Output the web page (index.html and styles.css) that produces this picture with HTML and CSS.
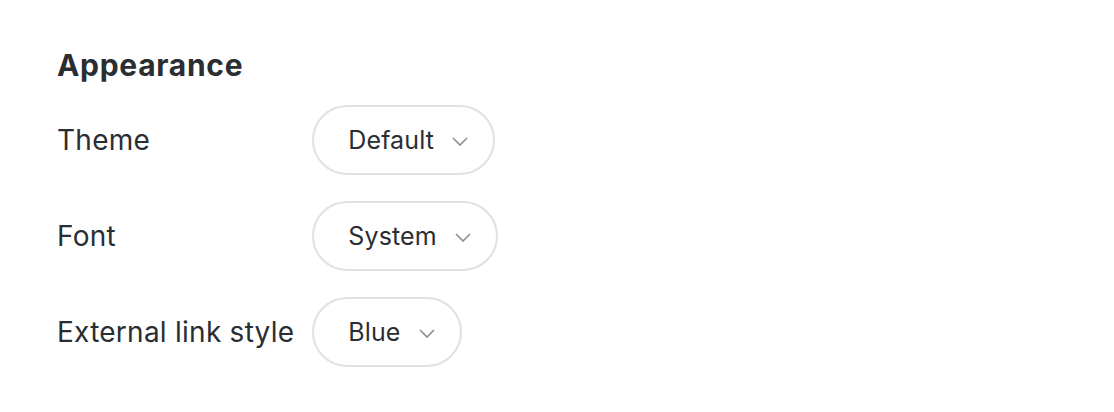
FILE: index.html
```html
<!DOCTYPE html>
<html>
<head>
<meta charset="utf-8">
<link rel="stylesheet" href="styles.css">
</head>
<body>
<section class="panel">
  <h2 class="title">Appearance</h2>
  <div class="grid">
    <div class="label">Theme</div>
    <div><button class="select">Default<svg class="chev" viewBox="0 0 16 9" width="16" height="9"><path d="M1 1l7 7 7-7" fill="none" stroke="#8c8f93" stroke-width="1.7"/></svg></button></div>
    <div class="label">Font</div>
    <div><button class="select">System<svg class="chev" viewBox="0 0 16 9" width="16" height="9"><path d="M1 1l7 7 7-7" fill="none" stroke="#8c8f93" stroke-width="1.7"/></svg></button></div>
    <div class="label">External link style</div>
    <div><button class="select">Blue<svg class="chev" viewBox="0 0 16 9" width="16" height="9"><path d="M1 1l7 7 7-7" fill="none" stroke="#8c8f93" stroke-width="1.7"/></svg></button></div>
  </div>
</section>
</body>
</html>
```
FILE: styles.css
```css
html, body {
  margin: 0;
  padding: 0;
  background: #ffffff;
}
body {
  font-family: Inter, "Noto Sans", sans-serif;
  color: #2a2e33;
}
.panel {
  padding: 45px 0 0 57px;
}
.title {
  margin: 0;
  font-size: 30px;
  font-weight: 700;
  line-height: 40px;
  letter-spacing: 0.7px;
}
.grid {
  margin-top: 20px;
  display: grid;
  grid-template-columns: auto auto;
  justify-content: start;
  align-items: center;
  column-gap: 18px;
  row-gap: 26px;
}
.label {
  font-size: 28px;
  line-height: 34px;
  letter-spacing: 0.25px;
}
.select {
  display: inline-flex;
  align-items: center;
  height: 70px;
  box-sizing: border-box;
  padding: 0 25px 0 34px;
  border: 2px solid #dfe1e4;
  border-radius: 35px;
  background: #fff;
  font-family: Inter, "Noto Sans", sans-serif;
  font-size: 25px;
  letter-spacing: 0.1px;
  color: #2a2e33;
  cursor: pointer;
}
.chev {
  margin-left: 18px;
  margin-top: 2px;
}
```
